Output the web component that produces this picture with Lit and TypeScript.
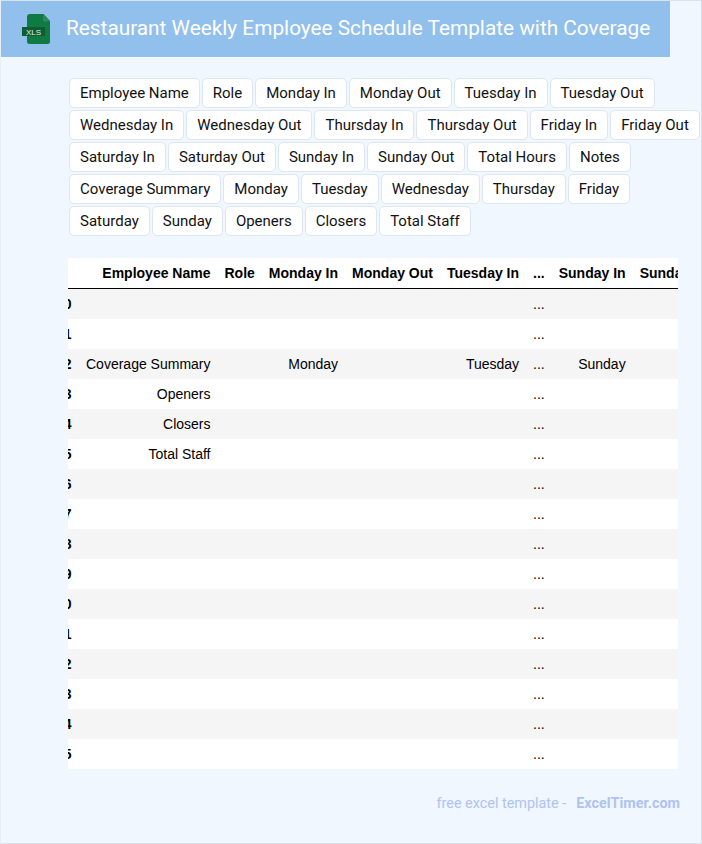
import { LitElement, html, css } from "lit";
import { customElement } from "lit/decorators.js";

const CHIPS = ["Employee Name","Role","Monday In","Monday Out","Tuesday In","Tuesday Out","Wednesday In","Wednesday Out","Thursday In","Thursday Out","Friday In","Friday Out","Saturday In","Saturday Out","Sunday In","Sunday Out","Total Hours","Notes","Coverage Summary","Monday","Tuesday","Wednesday","Thursday","Friday","Saturday","Sunday","Openers","Closers","Total Staff"];
const COLS = ["Employee Name","Role","Monday In","Monday Out","Tuesday In","...","Sunday In","Sunday Out","Total Hours"];
const NAMES: Record<number, string> = { 2: "Coverage Summary", 3: "Openers", 4: "Closers", 5: "Total Staff" };

@customElement("app-root")
export class AppRoot extends LitElement {
  static styles = css`
    :host { display: block; width: 702px; height: 844px; box-sizing: border-box; background: #f0f7ff; border: 1px solid #d8e3ef; border-left-color: #e6eef7; overflow: hidden; font-family: Roboto, sans-serif; }
    .head { width: 669px; height: 56px; background: #92c0ec; display: flex; align-items: center; gap: 16px; padding-left: 21px; box-sizing: border-box; }
    .icon { width: 28px; height: 32px; flex: none; display: block; }
    h1 { margin: 0 0 2px; font-size: 20.8px; font-weight: 400; color: #fff; white-space: nowrap; line-height: 54px; }
    .chips { display: flex; flex-wrap: wrap; gap: 2px; padding: 21px 0 0 68px; }
    .chip { height: 30px; box-sizing: border-box; padding: 0 10px; border: 1px solid #dde6f2; border-radius: 5px; background: #fff; color: #111; font-size: 15px; line-height: 28px; white-space: nowrap; }
    .wrap { width: 610px; margin: 22px 0 0 67px; overflow: hidden; background: #fff; }
    table { border-collapse: separate; border-spacing: 0; margin-left: -19.5px; font-family: "Liberation Sans", Arial, sans-serif; font-size: 14px; color: #000; }
    th, td { height: 30px; padding: 0 7px; text-align: right; white-space: nowrap; box-sizing: border-box; }
    thead th { height: 31px; border-bottom: 1px solid #000; }
    tbody tr:nth-child(odd) { background: #f5f5f5; }
    .idx { min-width: 30px; }
    .name { min-width: 139px; }
    .foot { display: flex; justify-content: flex-end; gap: 10px; padding: 26px 21px 0 0; font-size: 14.4px; color: #afc3f2; line-height: 17px; }
    .foot b { font-weight: 700; }
  `;

  render() {
    return html`
      <div class="head">
        <svg class="icon" viewBox="0 0 28 32" aria-hidden="true">
          <path d="M8 1h13.500L28 8v20.500a2.500 2.500 0 0 1-2.500 2.500H7.500A2.500 2.500 0 0 1 5 28.500V4a3 3 0 0 1 3-3z" fill="#107a43"/>
          <path d="M21 1.500v5A2 2 0 0 0 23 8.500h5z" fill="#2a8c5a"/>
          <rect x="0" y="14" width="23" height="9" fill="#0c5c34"/>
          <text x="11.500" y="21.500" text-anchor="middle" font-family="Liberation Sans, sans-serif" font-size="8" fill="#e6f2ea">XLS</text>
        </svg>
        <h1>Restaurant Weekly Employee Schedule Template with Coverage</h1>
      </div>
      <div class="chips">${CHIPS.map((c) => html`<span class="chip">${c}</span>`)}</div>
      <div class="wrap">
        <table>
          <thead>
            <tr><th class="idx"></th>${COLS.map((c, i) => html`<th class=${i === 0 ? "name" : ""}>${c}</th>`)}</tr>
          </thead>
          <tbody>
            ${Array.from({ length: 16 }, (_, r) => html`
              <tr>
                <th class="idx">${r}</th>
                <td>${NAMES[r] ?? ""}</td>
                <td></td>
                <td>${r === 2 ? "Monday" : ""}</td>
                <td></td>
                <td>${r === 2 ? "Tuesday" : ""}</td>
                <td>...</td>
                <td>${r === 2 ? "Sunday" : ""}</td>
                <td></td>
                <td></td>
              </tr>`)}
          </tbody>
        </table>
      </div>
      <div class="foot"><span>free excel template -</span><b>ExcelTimer.com</b></div>
    `;
  }
}
